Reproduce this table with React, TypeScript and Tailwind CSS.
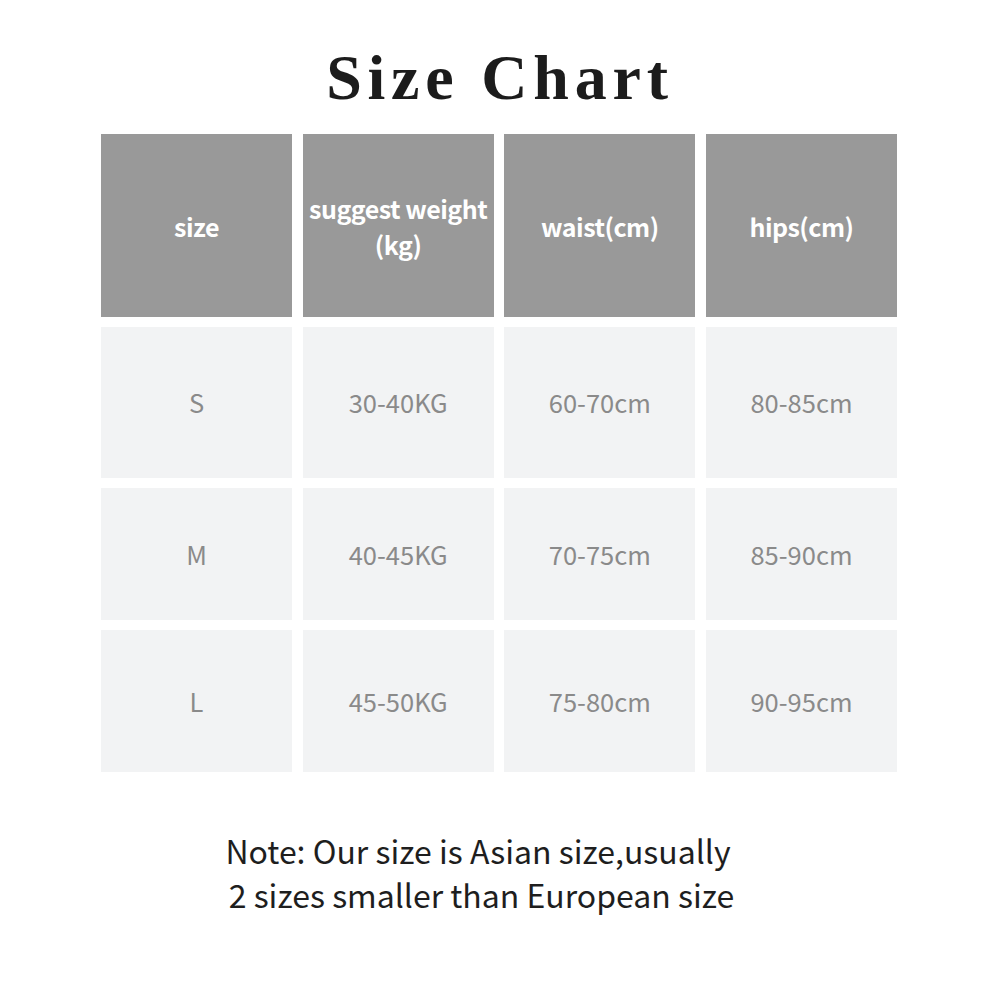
const headers = [["size"], ["suggest weight", "(kg)"], ["waist(cm)"], ["hips(cm)"]];

const rows = [
  { h: "h-[151px]", cells: ["S", "30-40KG", "60-70cm", "80-85cm"] },
  { h: "h-[132px]", cells: ["M", "40-45KG", "70-75cm", "85-90cm"] },
  { h: "h-[142px]", cells: ["L", "45-50KG", "75-80cm", "90-95cm"] },
];

export default function App() {
  return (
    <div className="w-[1000px] h-[1000px] bg-white flex flex-col items-center font-['Noto_Sans_CJK_SC','Noto_Sans',sans-serif]">
      <h1 className="mt-[38px] h-[80px] leading-[80px] text-[64px] font-bold tracking-[5.8px] text-[#1c1c1c] font-['Liberation_Serif','DejaVu_Serif',serif]">
        Size Chart
      </h1>

      <div className="mt-[16px] self-start ml-[101px] w-[796px] grid grid-cols-4 gap-x-[10.6px] gap-y-[10px]">
        {headers.map((lines, i) => (
          <div
            key={i}
            className="h-[183px] bg-[#999999] flex flex-col items-center justify-center text-white font-bold text-[25px] leading-[36px] tracking-[-0.5px]"
          >
            {lines.map((l) => (
              <span key={l}>{l}</span>
            ))}
          </div>
        ))}

        {rows.map((row) =>
          row.cells.map((c, i) => (
            <div
              key={row.cells[0] + i}
              className={`${row.h} bg-[#f2f3f4] flex items-center justify-center text-[#8a8a8a] text-[25.5px]`}
            >
              {c}
            </div>
          ))
        )}
      </div>

      <div className="mt-[56px] mr-[44px] text-center text-[32px] leading-[44px] text-[#1e1e1e]">
        <p>Note: Our size is Asian size,usually</p>
        <p className="pl-[7px]">2 sizes smaller than European size</p>
      </div>
    </div>
  );
}
